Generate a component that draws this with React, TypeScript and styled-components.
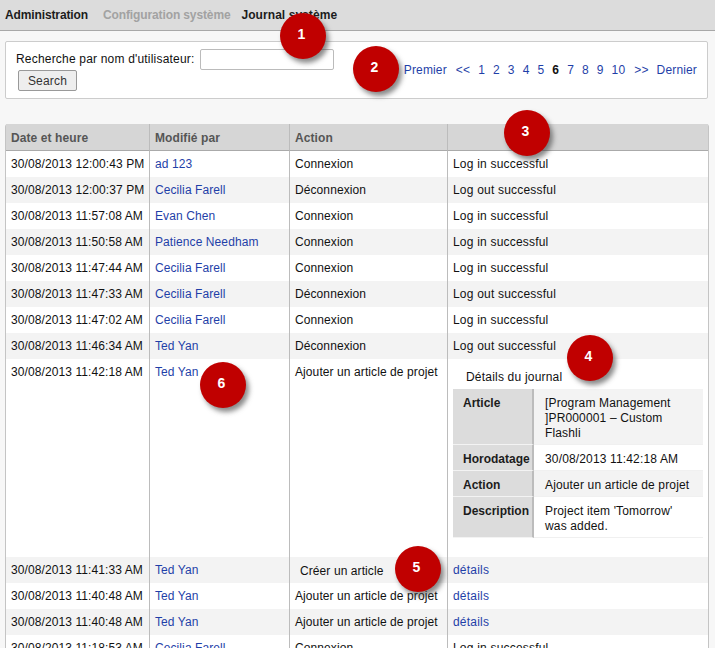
import React from "react";
import styled, { createGlobalStyle } from "styled-components";

const Global = createGlobalStyle`
  html, body { margin: 0; padding: 0; background: #f7f7f7; height: 648px; overflow: hidden; }
  body { font-family: "Liberation Sans", Arial, sans-serif; font-size: 12px; color: #111; }
`;
const Page = styled.div`position: relative; width: 715px; height: 648px; overflow: hidden;`;
const TopBar = styled.nav`
  height: 30px; background: #dcdcdc; border-bottom: 1px solid #a8a8a8;
  display: flex; align-items: center; padding-left: 5px; font-weight: bold; font-size: 12px; letter-spacing: -0.12px;
`;
const Crumb = styled.span<{ $muted?: boolean; $gap: number; $wide?: boolean }>`
  color: ${p => (p.$muted ? "#a2a2a2" : "#1c1c1c")}; margin-right: ${p => p.$gap}px;
  letter-spacing: ${p => (p.$wide ? "0.06px" : "inherit")};
`;
const Panel = styled.section`
  margin: 10px 7px 0 5px; height: 56px; background: #fff; border: 1px solid #ccc; border-radius: 2px;
  display: flex; justify-content: space-between;
`;
const SearchForm = styled.form`width: 330px; padding: 7px 0 0 10px; box-sizing: border-box;`;
const SearchLine = styled.div`display: flex; align-items: center; height: 20px; font-size: 12px; letter-spacing: 0.19px;`;
const SearchInput = styled.input`
  width: 134px; height: 21px; box-sizing: border-box; margin: 0 0 0 6px; border: 1px solid #bbb; border-radius: 2px;
  padding: 0; background: #fff; outline: none;
`;
const SearchButton = styled.button`
  display: block; width: 59px; height: 21px; margin: 1px 0 0 2px; padding: 0; box-sizing: border-box;
  border: 1px solid #999; border-radius: 2px; background: #eee; color: #333; letter-spacing: 0.2px;
  font: 12px "Liberation Sans", Arial, sans-serif;
`;
const Pager = styled.div`
  display: flex; align-items: center; height: 55px; padding: 0 10px 0 0; font-size: 12px; letter-spacing: 0.15px;
`;
const PageLink = styled.a<{ $current?: boolean; $gap: number }>`
  color: ${p => (p.$current ? "#111" : "#1f3fa8")}; font-weight: ${p => (p.$current ? "bold" : "normal")};
  margin-left: ${p => p.$gap}px; text-decoration: none;
`;
const LogTable = styled.table`
  margin: 25px 0 0 5px; width: 704px; table-layout: fixed; border-collapse: separate; border-spacing: 0;
  font-size: 12px; background: #fff; border-left: 1px solid #c4c4c4; border-right: 1px solid #c4c4c4;
  border-radius: 3px 3px 0 0; letter-spacing: 0.09px;
`;
const Head = styled.th`
  height: 27px; padding: 2px 0 0 5px; box-sizing: border-box; text-align: left; background: #d6d6d6;
  color: #555; font-weight: bold; border-bottom: 1px solid #aaa; border-right: 1px solid #bcbcbc;
  &:last-child { border-right: 0; }
`;
const Row = styled.tr<{ $alt?: boolean }>`
  background: ${p => (p.$alt ? "#f3f3f3" : "#fff")};
`;
const Cell = styled.td`
  height: 26px; padding: 0 0 0 5px; box-sizing: border-box; border-right: 1px solid #bcbcbc;
  white-space: nowrap; vertical-align: middle; color: #111;
  &:last-child { border-right: 0; letter-spacing: 0.2px; }
`;
const TopCell = styled(Cell)`vertical-align: top; padding-top: 6px; height: 198px;`;
const DetailCell = styled(Cell)`vertical-align: top; padding: 0 5px 0 5px; height: 198px; white-space: normal;`;
const Link = styled.a`color: #1f3fa8; text-decoration: none;`;
const EditedCell = styled(Cell)`padding: 2px 0 0 10px;`;
const DetailTitle = styled.div`padding: 11px 0 0 13px; height: 30px; box-sizing: border-box;`;
const DetailGrid = styled.dl`margin: 0; display: grid; grid-template-columns: 81px 1fr; width: 250px; letter-spacing: 0.15px;`;
const Label = styled.dt<{ $h: number }>`
  margin: 0; height: ${p => p.$h}px; box-sizing: border-box; padding: 7px 0 0 10px; font-weight: bold;
  background: #dcdcdc; border-right: 2px solid #bcbcbc; border-bottom: 1px solid #f3f3f3; color: #1c1c1c; letter-spacing: 0;
`;
const Value = styled.dd<{ $alt?: boolean; $h: number }>`
  margin: 0; height: ${p => p.$h}px; box-sizing: border-box; padding: 7px 0 0 11px; line-height: 15px; white-space: nowrap;
  background: ${p => (p.$alt ? "#f3f3f3" : "#fff")}; border-bottom: 1px solid #f0f0f0;
`;
const Marker = styled.div<{ $x: number; $y: number }>`
  position: absolute; left: ${p => p.$x - 23}px; top: ${p => p.$y - 23}px; width: 46px; height: 46px; border-radius: 50%;
  background: #c00000; color: #fff; font-weight: bold; font-size: 14px;
  display: flex; align-items: center; justify-content: center; padding: 0 3px 4px 0; box-sizing: border-box;
  box-shadow: 3px 4px 5px rgba(60, 60, 60, 0.6);
`;

const U = ["ad 123", "Cecilia Farell", "Evan Chen", "Patience Needham", "Cecilia Farell", "Cecilia Farell", "Cecilia Farell", "Ted Yan"];
const rows = [
  ["30/08/2013 12:00:43 PM", U[0], "Connexion", "Log in successful"],
  ["30/08/2013 12:00:37 PM", U[1], "Déconnexion", "Log out successful"],
  ["30/08/2013 11:57:08 AM", U[2], "Connexion", "Log in successful"],
  ["30/08/2013 11:50:58 AM", U[3], "Connexion", "Log in successful"],
  ["30/08/2013 11:47:44 AM", U[4], "Connexion", "Log in successful"],
  ["30/08/2013 11:47:33 AM", U[5], "Déconnexion", "Log out successful"],
  ["30/08/2013 11:47:02 AM", U[6], "Connexion", "Log in successful"],
  ["30/08/2013 11:46:34 AM", U[7], "Déconnexion", "Log out successful"],
];
const pages: [string, number, boolean?][] = [
  ["Premier", 0], ["<<", 9], ["1", 8], ["2", 8], ["3", 8], ["4", 8], ["5", 8], ["6", 8, true], ["7", 8], ["8", 8], ["9", 8], ["10", 8], [">>", 9], ["Dernier", 8],
];
const markers = [[303, 36], [376, 69], [527, 133], [590, 358], [418, 569], [223, 385]];

export default function App() {
  return (
    <Page>
      <Global />
      <TopBar>
        <Crumb $gap={15}>Administration</Crumb>
        <Crumb $muted $gap={11}>Configuration système</Crumb>
        <Crumb $gap={0} $wide>Journal système</Crumb>
      </TopBar>
      <Panel>
        <SearchForm>
          <SearchLine>Recherche par nom d'utilisateur:<SearchInput /></SearchLine>
          <SearchButton type="button">Search</SearchButton>
        </SearchForm>
        <Pager>
          {pages.map(([t, g, c]) => <PageLink key={t} $gap={g} $current={c}>{t}</PageLink>)}
        </Pager>
      </Panel>
      <LogTable>
        <colgroup>
          <col style={{ width: 144 }} /><col style={{ width: 140 }} /><col style={{ width: 158 }} /><col />
        </colgroup>
        <thead>
          <tr><Head>Date et heure</Head><Head>Modifié par</Head><Head>Action</Head><Head /></tr>
        </thead>
        <tbody>
          {rows.map((r, i) => (
            <Row key={i} $alt={i % 2 === 1}>
              <Cell>{r[0]}</Cell><Cell><Link>{r[1]}</Link></Cell><Cell>{r[2]}</Cell><Cell>{r[3]}</Cell>
            </Row>
          ))}
          <Row>
            <TopCell>30/08/2013 11:42:18 AM</TopCell>
            <TopCell><Link>Ted Yan</Link></TopCell>
            <TopCell>Ajouter un article de projet</TopCell>
            <DetailCell>
              <DetailTitle>Détails du journal</DetailTitle>
              <DetailGrid>
                <Label $h={56}>Article</Label>
                <Value $alt $h={56}>[Program Management<br />]PR000001 – Custom<br />Flashli</Value>
                <Label $h={26}>Horodatage</Label>
                <Value $h={26}>30/08/2013 11:42:18 AM</Value>
                <Label $h={26}>Action</Label>
                <Value $alt $h={26}>Ajouter un article de projet</Value>
                <Label $h={41}>Description</Label>
                <Value $h={41}>Project item 'Tomorrow'<br />was added.</Value>
              </DetailGrid>
            </DetailCell>
          </Row>
          <Row $alt>
            <Cell>30/08/2013 11:41:33 AM</Cell><Cell><Link>Ted Yan</Link></Cell>
            <EditedCell>Créer un article</EditedCell><Cell><Link>détails</Link></Cell>
          </Row>
          <Row>
            <Cell>30/08/2013 11:40:48 AM</Cell><Cell><Link>Ted Yan</Link></Cell>
            <Cell>Ajouter un article de projet</Cell><Cell><Link>détails</Link></Cell>
          </Row>
          <Row $alt>
            <Cell>30/08/2013 11:40:48 AM</Cell><Cell><Link>Ted Yan</Link></Cell>
            <Cell>Ajouter un article de projet</Cell><Cell><Link>détails</Link></Cell>
          </Row>
          <Row>
            <Cell>30/08/2013 11:18:53 AM</Cell><Cell><Link>Cecilia Farell</Link></Cell>
            <Cell>Connexion</Cell><Cell>Log in successful</Cell>
          </Row>
        </tbody>
      </LogTable>
      {markers.map(([x, y], i) => <Marker key={i} $x={x} $y={y}>{i + 1}</Marker>)}
    </Page>
  );
}
